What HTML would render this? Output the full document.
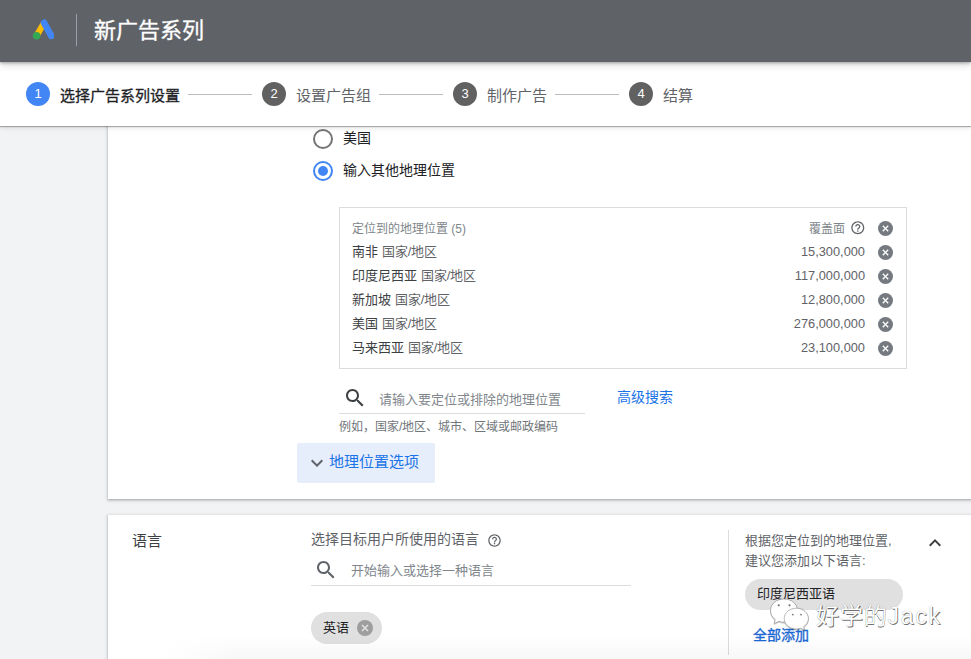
<!DOCTYPE html>
<html lang="zh-CN"><head><meta charset="utf-8">
<style>
*{box-sizing:border-box;margin:0;padding:0}
html,body{width:971px;height:659px;overflow:hidden}
body{background:#f1f3f4;font-family:"Liberation Sans",sans-serif;position:relative;color:#202124}
.abs{position:absolute;white-space:nowrap}
#hdr{position:absolute;left:0;top:0;width:971px;height:62px;background:#5f6368;z-index:3;box-shadow:0 1px 3px rgba(0,0,0,.3),0 3px 8px rgba(0,0,0,.15)}
#steps{position:absolute;left:0;top:61px;width:971px;height:65px;background:#fff;z-index:2;box-shadow:0 1px 1px rgba(0,0,0,.28),0 2px 5px rgba(0,0,0,.1)}
.card{position:absolute;left:108px;width:900px;background:#fff;box-shadow:0 1px 2px 0 rgba(60,64,67,.3),0 1px 3px 1px rgba(60,64,67,.15)}
.num{position:absolute;width:24px;height:24px;border-radius:50%;background:#616161;color:#fff;font-size:13px;line-height:23px;text-align:center}
.stxt{position:absolute;font-size:15px;line-height:20px;color:#5f6368;white-space:nowrap}
.sline{position:absolute;height:1px;background:#bdbdbd}
.xi{position:absolute;width:15px;height:15px}
.row{position:absolute;left:352px;font-size:13px;line-height:18px;color:#3c4043;white-space:nowrap}
.row span{color:#5f6368}
.val{position:absolute;right:106px;font-size:12.8px;line-height:20px;color:#5f6368;text-align:right;white-space:nowrap}
</style></head><body>

<div id="hdr">
  <svg class="abs" style="left:30px;top:18px" width="24" height="24" viewBox="0 0 24 24">
    <path d="M6.6 17.7 L13.5 5.8" stroke="#fbbc04" stroke-width="6.2"/>
    <path d="M14.1 4.8 L21.3 17.9" stroke="#4285f4" stroke-width="6.6" stroke-linecap="round"/>
    <circle cx="6.6" cy="17.7" r="3.8" fill="#34a853"/>
  </svg>
  <div class="abs" style="left:76px;top:14px;width:1px;height:32px;background:#9aa0a6"></div>
  <div class="abs" style="left:94px;top:16px;font-size:22px;line-height:30px;color:#fff;-webkit-text-stroke:0.3px #fff">新广告系列</div>
</div>

<div id="steps">
  <div class="num" style="left:26px;top:21px;background:#4285f4">1</div>
  <div class="stxt" style="left:60px;top:25px;color:#202124;-webkit-text-stroke:0.3px #202124">选择广告系列设置</div>
  <div class="sline" style="left:188px;top:33px;width:64px"></div>
  <div class="num" style="left:262px;top:21px">2</div>
  <div class="stxt" style="left:296px;top:25px">设置广告组</div>
  <div class="sline" style="left:379px;top:33px;width:64px"></div>
  <div class="num" style="left:453px;top:21px">3</div>
  <div class="stxt" style="left:487px;top:25px">制作广告</div>
  <div class="sline" style="left:555px;top:33px;width:64px"></div>
  <div class="num" style="left:629px;top:21px">4</div>
  <div class="stxt" style="left:663px;top:25px">结算</div>
</div>

<div class="card" style="top:100px;height:399px"></div>
<div class="card" style="top:515px;height:200px"></div>

<!-- radios -->
<div class="abs" style="left:313px;top:129px;width:20px;height:20px;border-radius:50%;border:2px solid #757575"></div>
<div class="abs" style="left:343px;top:128px;font-size:14px;line-height:20px;color:#202124">美国</div>
<div class="abs" style="left:313px;top:161px;width:20px;height:20px;border-radius:50%;border:2px solid #4285f4"></div>
<div class="abs" style="left:318px;top:166px;width:10px;height:10px;border-radius:50%;background:#4285f4"></div>
<div class="abs" style="left:343px;top:160px;font-size:14px;line-height:20px;color:#202124">输入其他地理位置</div>

<!-- location box -->
<div class="abs" style="left:339px;top:207px;width:568px;height:162px;border:1px solid #dadce0"></div>
<div class="abs" style="left:352px;top:221px;font-size:12px;line-height:16px;color:#80868b">定位到的地理位置 (5)</div>
<div class="abs" style="right:126px;top:221px;font-size:12px;line-height:16px;color:#80868b">覆盖面</div>
<svg class="abs" style="left:849.7px;top:220.2px" width="15.6" height="15.6" viewBox="0 0 24 24"><path fill="#5f6368" d="M11 18h2v-2h-2v2zm1-16C6.48 2 2 6.48 2 12s4.48 10 10 10 10-4.48 10-10S17.52 2 12 2zm0 18c-4.410 0-8-3.59-8-8s3.59-8 8-8 8 3.59 8 8-3.59 8-8 8zm0-14c-2.21 0-4 1.79-4 4h2c0-1.1.9-2 2-2s2 .9 2 2c0 2-3 1.75-3 5h2c0-2.25 3-2.5 3-5 0-2.21-1.79-4-4-4z"/></svg>

<div class="row" style="top:243px">南非 <span>国家/地区</span></div>
<div class="row" style="top:267px">印度尼西亚 <span>国家/地区</span></div>
<div class="row" style="top:291px">新加坡 <span>国家/地区</span></div>
<div class="row" style="top:315px">美国 <span>国家/地区</span></div>
<div class="row" style="top:339px">马来西亚 <span>国家/地区</span></div>
<div class="val" style="top:242px">15,300,000</div>
<div class="val" style="top:266px">117,000,000</div>
<div class="val" style="top:290px">12,800,000</div>
<div class="val" style="top:314px">276,000,000</div>
<div class="val" style="top:338px">23,100,000</div>

<svg width="0" height="0" style="position:absolute"><defs>
<g id="xc"><circle cx="7.5" cy="7.5" r="7.5" fill="#757a80"/><path d="M4.8 4.8 L10.2 10.2 M10.2 4.8 L4.8 10.2" stroke="#fff" stroke-width="1.3"/></g>
</defs></svg>
<svg class="xi" style="left:878px;top:221px"><use href="#xc"/></svg>
<svg class="xi" style="left:878px;top:245px"><use href="#xc"/></svg>
<svg class="xi" style="left:878px;top:269px"><use href="#xc"/></svg>
<svg class="xi" style="left:878px;top:293px"><use href="#xc"/></svg>
<svg class="xi" style="left:878px;top:317px"><use href="#xc"/></svg>
<svg class="xi" style="left:878px;top:341px"><use href="#xc"/></svg>

<!-- search -->
<svg class="abs" style="left:343px;top:386px" width="24" height="24" viewBox="0 0 24 24"><path fill="#3c4043" d="M15.5 14h-.79l-.28-.27C15.41 12.59 16 11.11 16 9.5 16 5.910 13.09 3 9.5 3S3 5.91 3 9.5 5.91 16 9.5 16c1.61 0 3.09-.59 4.230-1.57l.27.28v.79l5 4.99L20.49 19l-4.99-5zm-6 0C7.01 14 5 11.99 5 9.5S7.01 5 9.5 5 14 7.01 14 9.5 11.99 14 9.5 14z"/></svg>
<div class="abs" style="left:379px;top:391px;font-size:13px;line-height:18px;color:#80868b">请输入要定位或排除的地理位置</div>
<div class="abs" style="left:339px;top:413px;width:246px;height:1px;background:#dadce0"></div>
<div class="abs" style="left:339px;top:419px;font-size:12px;line-height:16px;color:#70757a">例如，国家/地区、城市、区域或邮政编码</div>
<div class="abs" style="left:617px;top:387px;font-size:14px;line-height:20px;color:#1a73e8">高级搜索</div>

<div class="abs" style="left:297px;top:443px;width:138px;height:40px;background:#e7eefb;border-radius:2px"></div>
<svg class="abs" style="left:305px;top:451px" width="24" height="24" viewBox="0 0 24 24"><path d="M16.59 8.59L12 13.17 7.41 8.59 6 10l6 6 6-6z" fill="#5f6368"/></svg>
<div class="abs" style="left:329px;top:452px;font-size:15px;line-height:20px;color:#1a73e8">地理位置选项</div>

<!-- language card -->
<div class="abs" style="left:132px;top:531px;font-size:15px;line-height:20px;color:#3c4043">语言</div>
<div class="abs" style="left:311px;top:529px;font-size:14px;line-height:20px;color:#5f6368">选择目标用户所使用的语言</div>
<svg class="abs" style="left:487px;top:532.5px" width="15" height="15" viewBox="0 0 24 24"><path fill="#5f6368" d="M11 18h2v-2h-2v2zm1-16C6.48 2 2 6.48 2 12s4.48 10 10 10 10-4.48 10-10S17.52 2 12 2zm0 18c-4.410 0-8-3.59-8-8s3.59-8 8-8 8 3.59 8 8-3.59 8-8 8zm0-14c-2.21 0-4 1.79-4 4h2c0-1.1.9-2 2-2s2 .9 2 2c0 2-3 1.75-3 5h2c0-2.25 3-2.5 3-5 0-2.21-1.79-4-4-4z"/></svg>
<svg class="abs" style="left:314px;top:558px" width="24" height="24" viewBox="0 0 24 24"><path fill="#5f6368" d="M15.5 14h-.79l-.28-.27C15.41 12.59 16 11.11 16 9.5 16 5.91 13.09 3 9.5 3S3 5.91 3 9.5 5.91 16 9.5 16c1.61 0 3.09-.59 4.23-1.57l.27.28v.79l5 4.99L20.49 19l-4.99-5zm-6 0C7.01 14 5 11.99 5 9.5S7.01 5 9.5 5 14 7.01 14 9.5 11.99 14 9.5 14z"/></svg>
<div class="abs" style="left:351px;top:562px;font-size:13px;line-height:18px;color:#80868b">开始输入或选择一种语言</div>
<div class="abs" style="left:311px;top:585px;width:320px;height:1px;background:#dadce0"></div>

<div class="abs" style="left:311px;top:612px;width:71px;height:32px;border-radius:16px;background:#e0e0e0"></div>
<div class="abs" style="left:323px;top:618px;font-size:13px;line-height:20px;color:#202124">英语</div>
<svg class="abs" style="left:357px;top:620px" width="16" height="16" viewBox="0 0 16 16"><circle cx="8" cy="8" r="8" fill="#9e9e9e"/><path d="M5 5 L11 11 M11 5 L5 11" stroke="#e0e0e0" stroke-width="1.6"/></svg>

<div class="abs" style="left:728px;top:530px;width:1px;height:125px;background:#dadce0"></div>
<div class="abs" style="left:745px;top:531px;font-size:13px;line-height:20px;color:#5f6368">根据您定位到的地理位置,</div>
<div class="abs" style="left:745px;top:551px;font-size:13px;line-height:20px;color:#5f6368">建议您添加以下语言:</div>
<svg class="abs" style="left:923px;top:531px" width="24" height="24" viewBox="0 0 24 24"><path fill="#3c4043" d="M12 8l-6 6 1.41 1.41L12 10.83l4.590 4.58L18 14z"/></svg>
<div class="abs" style="left:745px;top:579px;width:158px;height:31px;border-radius:16px;background:#e0e0e0"></div>
<div class="abs" style="left:757px;top:584px;font-size:13px;line-height:20px;color:#202124">印度尼西亚语</div>
<div class="abs" style="left:753px;top:625px;font-size:14px;line-height:20px;color:#1967d2;-webkit-text-stroke:0.35px #1967d2">全部添加</div>

<!-- watermark -->
<svg class="abs" style="left:764px;top:594px" width="50" height="40" viewBox="764 594 50 40">
  <defs><filter id="sh" x="-20%" y="-20%" width="140%" height="140%"><feDropShadow dx="0" dy="0.5" stdDeviation="0.6" flood-color="#000" flood-opacity="0.45"/></filter></defs>
  <g filter="url(#sh)">
    <path d="M784 599 C776.5 599 770.5 604 770.5 610.7 C770.5 614.3 772.3 617.4 775.2 619.5 L774.2 623.5 L779 621.3 C780.5 621.8 782.2 622.2 784 622.2 C791.5 622.2 797.5 617 797.5 610.7 C797.5 604 791.5 599 784 599 Z" fill="#fff" stroke="#9a9a9a" stroke-width="0.7"/>
    <path d="M796.3 608.2 C789.6 608.2 784.2 612.7 784.2 618.6 C784.2 624.5 789.6 629 796.3 629 C797.8 629 799.2 628.8 800.5 628.3 L804.5 630 L803.7 626.7 C806.5 624.8 808.4 621.9 808.4 618.6 C808.4 612.7 803 608.2 796.3 608.2 Z" fill="#fff" stroke="#9a9a9a" stroke-width="0.7"/>
  </g>
  <circle cx="778.7" cy="605.3" r="1.1" fill="#777"/><circle cx="789.5" cy="605.3" r="1.1" fill="#777"/>
  <circle cx="792.8" cy="614.6" r="0.9" fill="#777"/><circle cx="801" cy="614.6" r="0.9" fill="#777"/>
</svg>
<div class="abs" style="left:816px;top:601px;font-size:23px;line-height:30px;color:#fff;letter-spacing:0.8px;text-shadow:0.8px 0.8px 0.6px rgba(0,0,0,.55),0 0 0.8px rgba(0,0,0,.45)">好学的<span style="letter-spacing:1.8px">Jack</span></div>

<div class="abs" style="left:160px;top:636px;width:811px;height:23px;background:linear-gradient(to bottom,rgba(0,0,0,0),rgba(0,0,0,.03));-webkit-mask-image:linear-gradient(to right,transparent,#000 80px)"></div>
</body></html>
